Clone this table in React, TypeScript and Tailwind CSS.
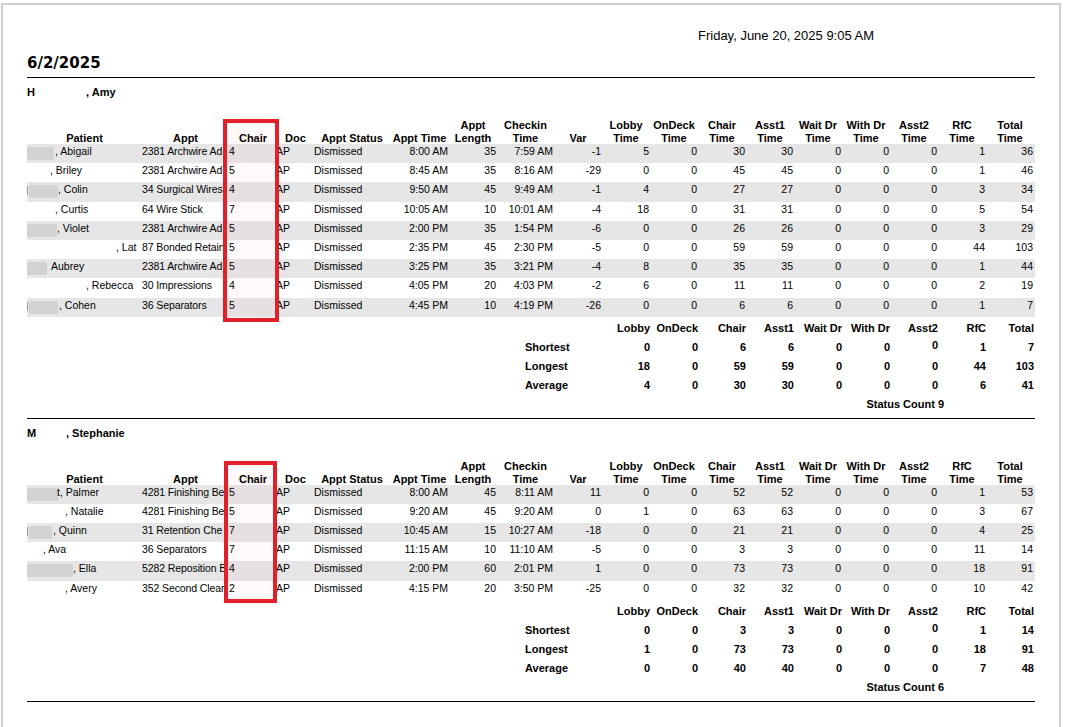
import React from "react";

type Row = {
  pre: number;
  blob?: [number, number];
  mark?: boolean;
  name: string;
  appt: string;
  chair: string;
  time: string;
  len: string;
  checkin: string;
  vals: string[];
};

const GRID =
  "grid grid-cols-[115px_87px_48px_37px_76px_59px_48px_57px_48px_repeat(9,48px)]";

const HEADERS: string[][] = [
  ["Patient"],
  ["Appt"],
  ["Chair"],
  ["Doc"],
  ["Appt Status"],
  ["Appt Time"],
  ["Appt", "Length"],
  ["Checkin", "Time"],
  ["Var"],
  ["Lobby", "Time"],
  ["OnDeck", "Time"],
  ["Chair", "Time"],
  ["Asst1", "Time"],
  ["Wait Dr", "Time"],
  ["With Dr", "Time"],
  ["Asst2", "Time"],
  ["RfC", "Time"],
  ["Total", "Time"],
];

const SUM_HEADERS = ["Lobby", "OnDeck", "Chair", "Asst1", "Wait Dr", "With Dr", "Asst2", "RfC", "Total"];

const rows1: Row[] = [
  { pre: 28, blob: [0, 27], name: ", Abigail", appt: "2381 Archwire Ad", chair: "4", time: "8:00 AM", len: "35", checkin: "7:59 AM", vals: ["-1", "5", "0", "30", "30", "0", "0", "0", "1", "36"] },
  { pre: 23, name: ", Briley", appt: "2381 Archwire Ad", chair: "5", time: "8:45 AM", len: "35", checkin: "8:16 AM", vals: ["-29", "0", "0", "45", "45", "0", "0", "0", "1", "46"] },
  { pre: 31, blob: [2, 29], mark: true, name: ", Colin", appt: "34 Surgical Wires", chair: "4", time: "9:50 AM", len: "45", checkin: "9:49 AM", vals: ["-1", "4", "0", "27", "27", "0", "0", "0", "3", "34"] },
  { pre: 28, name: ", Curtis", appt: "64 Wire Stick", chair: "7", time: "10:05 AM", len: "10", checkin: "10:01 AM", vals: ["-4", "18", "0", "31", "31", "0", "0", "0", "5", "54"] },
  { pre: 30, blob: [0, 30], name: ", Violet", appt: "2381 Archwire Ad", chair: "5", time: "2:00 PM", len: "35", checkin: "1:54 PM", vals: ["-6", "0", "0", "26", "26", "0", "0", "0", "3", "29"] },
  { pre: 89, name: ", Lat", appt: "87 Bonded Retain", chair: "5", time: "2:35 PM", len: "45", checkin: "2:30 PM", vals: ["-5", "0", "0", "59", "59", "0", "0", "0", "44", "103"] },
  { pre: 24, blob: [0, 20], name: "Aubrey", appt: "2381 Archwire Ad", chair: "5", time: "3:25 PM", len: "35", checkin: "3:21 PM", vals: ["-4", "8", "0", "35", "35", "0", "0", "0", "1", "44"] },
  { pre: 59, name: ", Rebecca", appt: "30 Impressions", chair: "4", time: "4:05 PM", len: "20", checkin: "4:03 PM", vals: ["-2", "6", "0", "11", "11", "0", "0", "0", "2", "19"] },
  { pre: 32, blob: [2, 29], mark: true, name: ", Cohen", appt: "36 Separators", chair: "5", time: "4:45 PM", len: "10", checkin: "4:19 PM", vals: ["-26", "0", "0", "6", "6", "0", "0", "0", "1", "7"] },
];

const rows2: Row[] = [
  { pre: 30, blob: [0, 31], name: "t, Palmer", appt: "4281 Finishing Be", chair: "5", time: "8:00 AM", len: "45", checkin: "8:11 AM", vals: ["11", "0", "0", "52", "52", "0", "0", "0", "1", "53"] },
  { pre: 38, name: ", Natalie", appt: "4281 Finishing Be", chair: "5", time: "9:20 AM", len: "45", checkin: "9:20 AM", vals: ["0", "1", "0", "63", "63", "0", "0", "0", "3", "67"] },
  { pre: 26, blob: [2, 23], mark: true, name: ", Quinn", appt: "31 Retention Che", chair: "7", time: "10:45 AM", len: "15", checkin: "10:27 AM", vals: ["-18", "0", "0", "21", "21", "0", "0", "0", "4", "25"] },
  { pre: 16, name: ", Ava", appt: "36 Separators", chair: "7", time: "11:15 AM", len: "10", checkin: "11:10 AM", vals: ["-5", "0", "0", "3", "3", "0", "0", "0", "11", "14"] },
  { pre: 46, blob: [0, 46], name: ", Ella", appt: "5282 Reposition B", chair: "4", time: "2:00 PM", len: "60", checkin: "2:01 PM", vals: ["1", "0", "0", "73", "73", "0", "0", "0", "18", "91"] },
  { pre: 38, name: ", Avery", appt: "352 Second Clear", chair: "2", time: "4:15 PM", len: "20", checkin: "3:50 PM", vals: ["-25", "0", "0", "32", "32", "0", "0", "0", "10", "42"] },
];

const sum1 = [
  ["Shortest", "0", "0", "6", "6", "0", "0", "0", "1", "7"],
  ["Longest", "18", "0", "59", "59", "0", "0", "0", "44", "103"],
  ["Average", "4", "0", "30", "30", "0", "0", "0", "6", "41"],
];
const sum2 = [
  ["Shortest", "0", "0", "3", "3", "0", "0", "0", "1", "14"],
  ["Longest", "1", "0", "73", "73", "0", "0", "0", "18", "91"],
  ["Average", "0", "0", "40", "40", "0", "0", "0", "7", "48"],
];

function DataRow({ r, i }: { r: Row; i: number }) {
  const bg = i % 2 === 0 ? "bg-[#e6e6e6]" : "bg-white";
  const cell = "h-[19.2px] pt-[1px] leading-[13px] whitespace-nowrap overflow-hidden";
  const right = cell + " text-right pr-[1px]";
  return (
    <div className={`${GRID} ${bg} text-[10.5px] text-black`}>
      <div className={cell + " relative"}>
        {r.mark && <span className="absolute left-0 top-[4px] w-[1px] h-[9px] bg-[#9a9a9a]" />}
        {r.blob && (
          <span
            className="absolute top-[3px] h-[13px] bg-[#d2d2d2] blur-[0.6px] rounded-[2px]"
            style={{ left: r.blob[0], width: r.blob[1] }}
          />
        )}
        <span className="relative" style={{ paddingLeft: r.pre }}>
          {r.name}
        </span>
      </div>
      <div className={cell + " tracking-[-0.1px]"}>{r.appt}</div>
      <div className={cell}>{r.chair}</div>
      <div className={cell + " -ml-[1px]"}>AP</div>
      <div className={cell}>Dismissed</div>
      <div className={right}>{r.time}</div>
      <div className={right}>{r.len}</div>
      <div className={right}>{r.checkin}</div>
      {r.vals.map((v, k) => (
        <div key={k} className={right}>
          {v}
        </div>
      ))}
    </div>
  );
}

function Section({
  first,
  gap,
  rest,
  rows,
  sums,
  count,
  box,
}: {
  first: string;
  gap: number;
  rest: string;
  rows: Row[];
  sums: string[][];
  count: string;
  box: { top: string; left: string; w: string; h: string };
}) {
  return (
    <div>
      <div className="mt-[7px] h-[14px] leading-[14px] text-[11px] font-bold flex">
        <span style={{ width: gap }} className="inline-block">
          {first}
        </span>
        <span>{rest}</span>
      </div>
      <div className="relative mt-[20px]">
        <div className={`${GRID} h-[26px] mb-[-1px] text-[11px] font-bold leading-[13px] text-black`}>
          {HEADERS.map((h, k) => (
            <div key={k} className="flex flex-col justify-end items-center whitespace-nowrap">
              {h.map((t, j) => (
                <div key={j}>{t}</div>
              ))}
            </div>
          ))}
        </div>
        {rows.map((r, i) => (
          <DataRow key={i} r={r} i={i} />
        ))}
        <div
          className={`absolute ${box.top} ${box.left} ${box.w} ${box.h} border-[4px] border-[#e3202a] bg-[rgba(255,0,0,0.025)]`}
        />
      </div>
      <div className="mt-[2.5px] text-[11px] font-bold text-black">
        <div className={`${GRID} h-[19px] items-center leading-[13px]`}>
          <div className="col-span-9" />
          {SUM_HEADERS.map((h) => (
            <div key={h} className="text-right whitespace-nowrap">
              {h}
            </div>
          ))}
        </div>
        {sums.map((s) => (
          <div key={s[0]} className={`${GRID} h-[19px] items-center leading-[13px]`}>
            <div className="col-span-9 pl-[498px]">{s[0]}</div>
            {s.slice(1).map((v, k) => (
              <div key={k} className={`text-right ${k === 6 && s[0] === "Shortest" ? "-translate-y-[2px]" : ""}`}>
                {v}
              </div>
            ))}
          </div>
        ))}
        <div className="h-[19px] flex items-center justify-end pr-[90px] leading-[13px] w-[1007px]">
          Status Count {count}
        </div>
      </div>
      <div className="mt-[3.5px] h-px bg-black w-[1008px]" />
    </div>
  );
}

export default function App() {
  return (
    <div className="w-[1075px] h-[727px] overflow-hidden bg-white font-['Liberation_Sans',Arial,sans-serif] text-black">
      <div className="ml-[1px] mt-[3px] w-[1060px] h-[760px] border-2 border-b-0 border-[#cfcfcf] pl-[24px]">
        <div className="w-[1008px]">
          <div className="mt-[24px] h-[14px] leading-[14px] text-[13px] pl-[671px] whitespace-nowrap">
            Friday, June 20, 2025 9:05 AM
          </div>
          <div className="mt-[11px] h-[18px] leading-[18px] text-[15px] font-bold font-['DejaVu_Sans',Verdana,sans-serif]">
            6/2/2025
          </div>
          <div className="mt-[5px] h-px bg-black" />
          <Section
            first="H"
            gap={59}
            rest=", Amy"
            rows={rows1}
            sums={sum1}
            count="9"
            box={{ top: "top-0", left: "left-[196px]", w: "w-[56px]", h: "h-[203px]" }}
          />
          <Section
            first="M"
            gap={39}
            rest=", Stephanie"
            rows={rows2}
            sums={sum2}
            count="6"
            box={{ top: "top-[1px]", left: "left-[197px]", w: "w-[53px]", h: "h-[142px]" }}
          />
        </div>
      </div>
    </div>
  );
}
